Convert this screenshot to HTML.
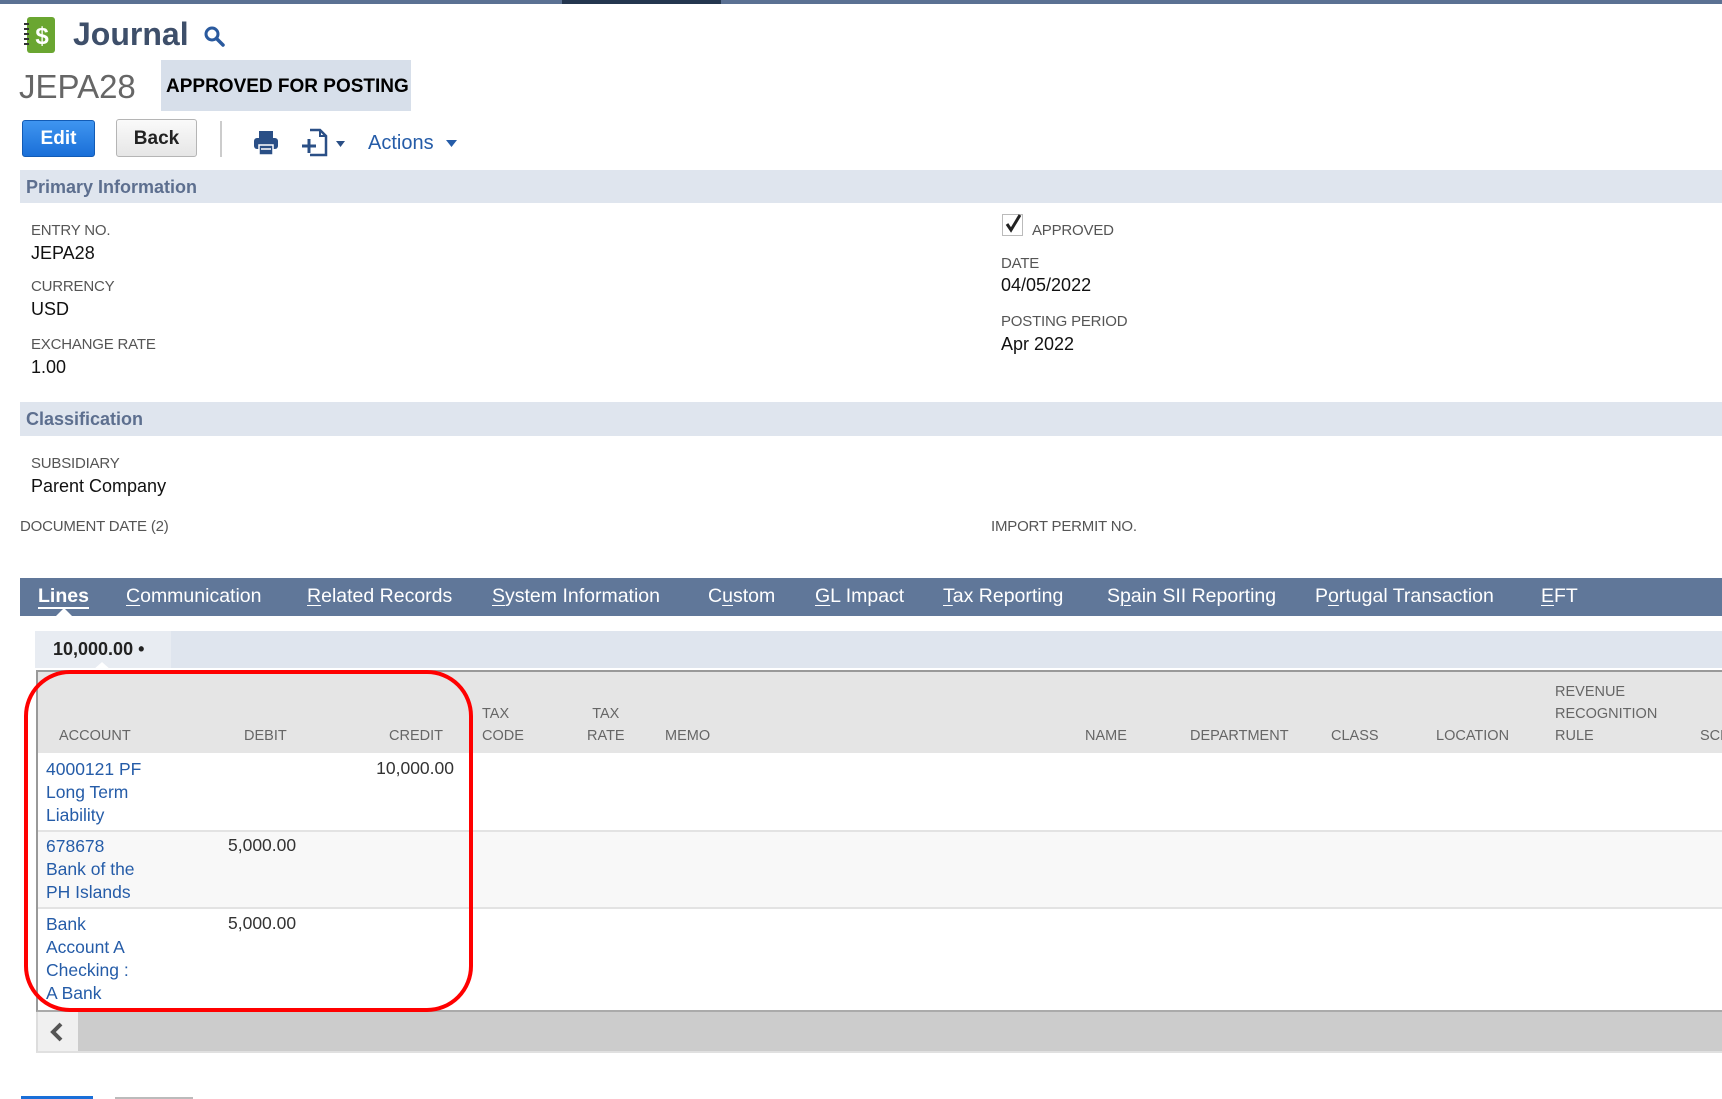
<!DOCTYPE html>
<html><head><meta charset="utf-8"><style>
*{margin:0;padding:0;box-sizing:border-box}
body{width:1722px;height:1099px;overflow:hidden;background:#fff;font-family:"Liberation Sans",sans-serif;color:#222;position:relative}
.a{position:absolute;white-space:nowrap}
.lbl{font-size:15px;color:#555;letter-spacing:-0.2px}
.val{font-size:18px;color:#111}
.hdr{font-size:14.5px;color:#666;line-height:22px}
.lnk{color:#255ca8;font-size:17.5px;line-height:23px}
.num{font-size:17.5px;color:#333}
.tab{font-size:19.5px;color:#fff;top:585px}
.tab u{text-decoration-thickness:1px;text-underline-offset:3px}
</style></head><body>
<div class="a" style="left:0;top:0;width:1722px;height:4px;background:#5b7193"></div>
<div class="a" style="left:562px;top:0;width:159px;height:4px;background:#24364f"></div>

<svg class="a" style="left:24px;top:16px" width="32" height="38" viewBox="0 0 32 38"><rect x="3" y="1" width="28" height="36" rx="3" fill="#6aa631"/><g stroke="#333" stroke-width="2"><line x1="0" y1="8" x2="5" y2="8"/><line x1="0" y1="13" x2="5" y2="13"/><line x1="0" y1="18" x2="5" y2="18"/><line x1="0" y1="23" x2="5" y2="23"/><line x1="0" y1="28" x2="5" y2="28"/></g><text x="18" y="28" font-size="24" font-weight="bold" fill="#fff" text-anchor="middle" font-family="Liberation Sans">$</text></svg>
<div class="a" style="left:73px;top:16px;font-size:32px;font-weight:bold;color:#3e4f6a">Journal</div>
<svg class="a" style="left:203px;top:25px" width="24" height="24" viewBox="0 0 24 24"><circle cx="9" cy="9" r="6" fill="none" stroke="#2a5a9e" stroke-width="3"/><line x1="13.5" y1="13.5" x2="20" y2="20" stroke="#2a5a9e" stroke-width="3.5" stroke-linecap="round"/></svg>

<div class="a" style="left:19px;top:68px;font-size:33px;color:#666">JEPA28</div>
<div class="a" style="left:161px;top:60px;width:250px;height:51px;background:#d7dfea"></div>
<div class="a" style="left:166px;top:76px;font-size:19px;font-weight:bold;color:#000">APPROVED FOR POSTING</div>

<div class="a" style="left:22px;top:120px;width:73px;height:37px;background:linear-gradient(#3f95f0,#1a6fd8);border:1px solid #125bb5;border-radius:3px;color:#fff;font-weight:bold;font-size:19px;text-align:center;line-height:36px">Edit</div>
<div class="a" style="left:116px;top:119px;width:81px;height:38px;background:linear-gradient(#fafafa,#e6e6e6);border:1px solid #b5b5b5;border-radius:3px;color:#222;font-weight:bold;font-size:19px;text-align:center;line-height:37px">Back</div>
<div class="a" style="left:220px;top:121px;width:2px;height:36px;background:#ccc"></div>
<svg class="a" style="left:252px;top:129px" width="28" height="28" viewBox="0 0 28 28"><rect x="7" y="2" width="14" height="7" fill="#2a4f86"/><rect x="2" y="9" width="24" height="11" rx="3" fill="#2a4f86"/><rect x="7" y="16" width="14" height="10" fill="#2a4f86" stroke="#fff" stroke-width="1.5"/><line x1="9" y1="20" x2="19" y2="20" stroke="#fff" stroke-width="1.5"/></svg>
<svg class="a" style="left:300px;top:128px" width="48" height="30" viewBox="0 0 48 30"><path d="M10 2h10l6 6v19H10" fill="none" stroke="#2a4f86" stroke-width="2.5"/><path d="M20 2v6h6" fill="none" stroke="#2a4f86" stroke-width="2"/><path d="M2 18h14M9 11v14" stroke="#2a4f86" stroke-width="3"/><path d="M36 13h9l-4.5 6z" fill="#2a4f86"/></svg>
<div class="a" style="left:368px;top:132px;font-size:20px;color:#255ca8">Actions</div>
<svg class="a" style="left:446px;top:140px" width="12" height="8"><path d="M0 0h11l-5.5 7z" fill="#255ca8"/></svg>

<div class="a" style="left:20px;top:170px;width:1702px;height:33px;background:#dfe5ee"></div>
<div class="a" style="left:26px;top:177px;font-size:18px;font-weight:bold;color:#5d6f8f">Primary Information</div>
<div class="a lbl" style="left:31px;top:222px">ENTRY NO.</div>
<div class="a val" style="left:31px;top:243px">JEPA28</div>
<div class="a lbl" style="left:31px;top:278px">CURRENCY</div>
<div class="a val" style="left:31px;top:299px">USD</div>
<div class="a lbl" style="left:31px;top:336px">EXCHANGE RATE</div>
<div class="a val" style="left:31px;top:357px">1.00</div>
<div class="a" style="left:1002px;top:214px;width:21px;height:22px;border:1px solid #bbb;background:#fff"></div>
<svg class="a" style="left:1004px;top:214px" width="18" height="20"><path d="M3 10l4 6 9-15" fill="none" stroke="#222" stroke-width="3"/></svg>
<div class="a lbl" style="left:1032px;top:222px">APPROVED</div>
<div class="a lbl" style="left:1001px;top:255px">DATE</div>
<div class="a val" style="left:1001px;top:275px">04/05/2022</div>
<div class="a lbl" style="left:1001px;top:313px">POSTING PERIOD</div>
<div class="a val" style="left:1001px;top:334px">Apr 2022</div>

<div class="a" style="left:20px;top:402px;width:1702px;height:34px;background:#dfe5ee"></div>
<div class="a" style="left:26px;top:409px;font-size:18px;font-weight:bold;color:#5d6f8f">Classification</div>
<div class="a lbl" style="left:31px;top:455px">SUBSIDIARY</div>
<div class="a val" style="left:31px;top:476px">Parent Company</div>
<div class="a lbl" style="left:20px;top:518px">DOCUMENT DATE (2)</div>
<div class="a lbl" style="left:991px;top:518px">IMPORT PERMIT NO.</div>

<div class="a" style="left:20px;top:578px;width:1702px;height:38px;background:#607799"></div>
<div class="a tab" style="left:38px;font-weight:bold;border-bottom:2px solid #fff;line-height:22px">Lines</div>
<svg class="a" style="left:56px;top:608px" width="16" height="8"><path d="M0 8l8-8 8 8z" fill="#fff"/></svg>
<div class="a tab" style="left:126px"><u>C</u>ommunication</div>
<div class="a tab" style="left:307px"><u>R</u>elated Records</div>
<div class="a tab" style="left:492px"><u>S</u>ystem Information</div>
<div class="a tab" style="left:708px">C<u>u</u>stom</div>
<div class="a tab" style="left:815px"><u>G</u>L Impact</div>
<div class="a tab" style="left:943px"><u>T</u>ax Reporting</div>
<div class="a tab" style="left:1107px">S<u>p</u>ain SII Reporting</div>
<div class="a tab" style="left:1315px">P<u>o</u>rtugal Transaction</div>
<div class="a tab" style="left:1541px"><u>E</u>FT</div>

<div class="a" style="left:35px;top:631px;width:1687px;height:37px;background:#dfe5ee"></div>
<div class="a" style="left:35px;top:631px;width:136px;height:37px;background:#e8ecf2"></div>
<div class="a" style="left:53px;top:639px;font-size:18px;font-weight:bold;color:#222">10,000.00 •</div>
<svg class="a" style="left:93px;top:661px" width="18" height="9"><path d="M0 9l9-8 9 8z" fill="#fff"/></svg>

<div class="a" style="left:36px;top:670px;width:1686px;height:342px;border:2px solid #999;border-right:none;border-bottom:2px solid #aaa;background:#fff"></div>
<div class="a" style="left:38px;top:672px;width:1684px;height:81px;background:#e5e5e5"></div>
<div class="a hdr" style="left:59px;top:725px">ACCOUNT</div>
<div class="a hdr" style="left:244px;top:725px">DEBIT</div>
<div class="a hdr" style="left:389px;top:725px">CREDIT</div>
<div class="a hdr" style="left:482px;top:703px">TAX<br>CODE</div>
<div class="a hdr" style="left:587px;top:703px;text-align:center">TAX<br>RATE</div>
<div class="a hdr" style="left:665px;top:725px">MEMO</div>
<div class="a hdr" style="left:1085px;top:725px">NAME</div>
<div class="a hdr" style="left:1190px;top:725px">DEPARTMENT</div>
<div class="a hdr" style="left:1331px;top:725px">CLASS</div>
<div class="a hdr" style="left:1436px;top:725px">LOCATION</div>
<div class="a hdr" style="left:1555px;top:681px">REVENUE<br>RECOGNITION<br>RULE</div>
<div class="a hdr" style="left:1700px;top:725px">SCH</div>

<div class="a" style="left:38px;top:830px;width:1684px;height:2px;background:#e3e3e3"></div>
<div class="a" style="left:38px;top:832px;width:1684px;height:75px;background:#f8f8f8"></div>
<div class="a" style="left:38px;top:907px;width:1684px;height:2px;background:#e3e3e3"></div>

<div class="a lnk" style="left:46px;top:758px">4000121 PF<br>Long Term<br>Liability</div>
<div class="a num" style="left:371px;top:758px;width:83px;text-align:right">10,000.00</div>
<div class="a lnk" style="left:46px;top:835px">678678<br>Bank of the<br>PH Islands</div>
<div class="a num" style="left:228px;top:835px">5,000.00</div>
<div class="a lnk" style="left:46px;top:913px">Bank<br>Account A<br>Checking :<br>A Bank</div>
<div class="a num" style="left:228px;top:913px">5,000.00</div>

<div class="a" style="left:36px;top:1012px;width:1686px;height:41px;background:#cccccc;border-left:2px solid #ddd;border-bottom:2px solid #e0e0e0"></div>
<div class="a" style="left:38px;top:1012px;width:40px;height:39px;background:#f0f0f0"></div>
<svg class="a" style="left:47px;top:1021px" width="20" height="22"><path d="M14 3l-8 8 8 8" fill="none" stroke="#555" stroke-width="4"/></svg>

<div class="a" style="left:24px;top:670px;width:449px;height:342px;border:4px solid #f00;border-radius:46px"></div>

<div class="a" style="left:21px;top:1096px;width:72px;height:3px;background:#1a6fd8"></div>
<div class="a" style="left:115px;top:1097px;width:78px;height:2px;background:#bbb"></div>
</body></html>
